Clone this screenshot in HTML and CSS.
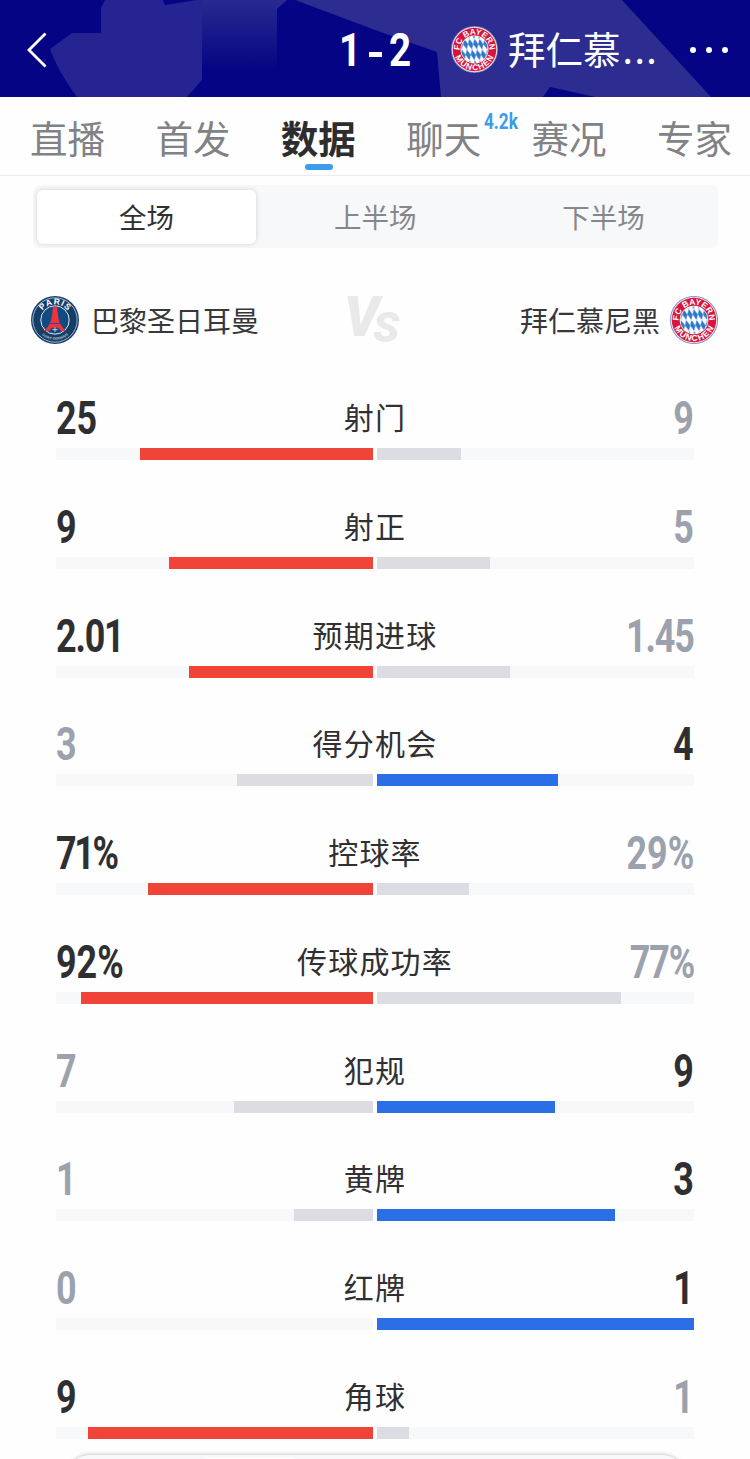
FILE: index.html
```html
<!DOCTYPE html>
<html lang="zh">
<head>
    <meta charset="UTF-8">
    <title>比赛数据</title>
    <link rel="stylesheet" href="styles.css">
</head>
<body>
<svg class="defs" width="0" height="0">
    <defs>
        <path id="arcTop" d="M8.8 24a15.2 15.2 0 0 1 30.4 0"/>
        <path id="arcBottom" d="M3 24a21 21 0 0 0 42 0"/>
        <path id="psgTop" d="M8.4 24a15.6 15.6 0 0 1 31.2 0"/>
        <path id="psgBottom" d="M4 24a20 20 0 0 0 40 0"/>
        <pattern id="lozenge" width="5.2" height="11" patternUnits="userSpaceOnUse" patternTransform="translate(24 24) skewX(14)">
            <path d="M2.600 0 5.200 5.500 2.600 11 0 5.500z" fill="#2f78c8"/>
        </pattern>
        <symbol id="bayern" viewBox="0 0 48 48">
            <circle cx="24" cy="24" r="24" fill="#6f7fc0"/>
            <circle cx="24" cy="24" r="23.2" fill="#f4dfe8"/>
            <circle cx="24" cy="24" r="22.2" fill="#d9143b"/>
            <circle cx="24" cy="24" r="14.3" fill="#fff"/>
            <circle cx="24" cy="24" r="13.6" fill="url(#lozenge)"/>
            <text class="crest-text"><textPath href="#arcTop" startOffset="50%">FC BAYERN</textPath></text>
            <text class="crest-text"><textPath href="#arcBottom" startOffset="50%" textLength="50">MÜNCHEN</textPath></text>
        </symbol>
        <symbol id="psg" viewBox="0 0 48 48">
            <circle cx="24" cy="24" r="24" fill="#173e68"/>
            <circle cx="24" cy="24" r="22.2" fill="none" stroke="#c5d3df" stroke-width=".8"/>
            <circle cx="24" cy="24" r="14.2" fill="#124b80" stroke="#dce6ee" stroke-width="1"/>
            <path d="M22 10.500h4l1 9c1 7 3.500 12 8.500 15.500h-6c-1-5-10-5-11 0h-6c5-3.500 7.500-8.500 8.500-15.500z" fill="#ee3340"/>
            <path d="M18.500 27.500h11" stroke="#124b80" stroke-width=".8"/>
            <path d="M24 31v5M21.500 33.500h5" stroke="#b9c6cf" stroke-width="1"/>
            <text class="crest-text psg-name"><textPath href="#psgTop" startOffset="50%" textLength="29">PARIS</textPath></text>
            <text class="crest-text psg-sub"><textPath href="#psgBottom" startOffset="50%">SAINT-GERMAIN</textPath></text>
        </symbol>
    </defs>
</svg>
<div class="page">
    <div class="header">
        <svg class="header-bg" viewBox="0 0 750 97" preserveAspectRatio="none">
            <defs>
                <linearGradient id="patch" x1="0" y1="0" x2="0" y2="1">
                    <stop offset="0" stop-color="#292990"/>
                    <stop offset=".35" stop-color="#1b1b8b"/>
                    <stop offset=".9" stop-color="#040484"/>
                </linearGradient>
            </defs>
            <rect width="750" height="97" fill="#040484"/>
            <path d="M201 0h86l-10 9v71h-76z" fill="url(#patch)"/>
            <path d="M50 49l22-16h29V8l4-8h97v80l-15 17H77C64 79 56 65 50 49z" fill="#252492"/>
            <path d="M163 0l2 5 32-5z" fill="#040484"/>
            <path d="M295 0h327l89 97H595l-45-10-7 10H441l-4-45-62-22z" fill="#2d2c91"/>
        </svg>
        <svg class="back" viewBox="0 0 20 36"><path d="M18.500 1.500 2 18l16.500 16.500" fill="none" stroke="#fff" stroke-width="2.800"/></svg>
        <div class="score"><span>1</span><i></i><span>2</span></div>
        <svg class="header-logo"><use href="#bayern"/></svg>
        <div class="header-name">拜仁慕<em>...</em></div>
        <div class="more"><i></i><i></i><i></i></div>
    </div>
    <ul class="tabs">
        <li>直播</li>
        <li>首发</li>
        <li class="on">数据</li>
        <li>聊天<em>4.2k</em></li>
        <li>赛况</li>
        <li>专家</li>
    </ul>
    <ul class="period">
        <li class="on">全场</li>
        <li>上半场</li>
        <li>下半场</li>
    </ul>
    <div class="teams">
        <div class="team"><svg><use href="#psg"/></svg><span>巴黎圣日耳曼</span></div>
        <svg class="vs" viewBox="0 0 56 48">
            <text x="-3" y="40" font-size="55">V</text>
            <text class="vs-s" x="26" y="46" font-size="43">S</text>
        </svg>
        <div class="team"><span>拜仁慕尼黑</span><svg><use href="#bayern"/></svg></div>
    </div>
    <ul class="stats">
        <li>
            <div class="info"><b class="win">25</b><span>射门</span><b>9</b></div>
            <div class="bars"><p><i class="red" style="width:73.6%"></i></p><p><i style="width:26.4%"></i></p></div>
        </li>
        <li>
            <div class="info"><b class="win">9</b><span>射正</span><b>5</b></div>
            <div class="bars"><p><i class="red" style="width:64.3%"></i></p><p><i style="width:35.7%"></i></p></div>
        </li>
        <li>
            <div class="info"><b class="win tight">2.01</b><span>预期进球</span><b class="tight">1.45</b></div>
            <div class="bars"><p><i class="red" style="width:58.1%"></i></p><p><i style="width:41.9%"></i></p></div>
        </li>
        <li>
            <div class="info"><b>3</b><span>得分机会</span><b class="win">4</b></div>
            <div class="bars"><p><i style="width:42.9%"></i></p><p><i class="blue" style="width:57.1%"></i></p></div>
        </li>
        <li>
            <div class="info"><b class="win tighter">71%</b><span>控球率</span><b>29%</b></div>
            <div class="bars"><p><i class="red" style="width:71%"></i></p><p><i style="width:29%"></i></p></div>
        </li>
        <li>
            <div class="info"><b class="win">92%</b><span>传球成功率</span><b class="tight">77%</b></div>
            <div class="bars"><p><i class="red" style="width:92%"></i></p><p><i style="width:77%"></i></p></div>
        </li>
        <li>
            <div class="info"><b>7</b><span>犯规</span><b class="win">9</b></div>
            <div class="bars"><p><i style="width:43.8%"></i></p><p><i class="blue" style="width:56.2%"></i></p></div>
        </li>
        <li>
            <div class="info"><b>1</b><span>黄牌</span><b class="win">3</b></div>
            <div class="bars"><p><i style="width:25%"></i></p><p><i class="blue" style="width:75%"></i></p></div>
        </li>
        <li>
            <div class="info"><b>0</b><span>红牌</span><b class="win">1</b></div>
            <div class="bars"><p><i style="width:0"></i></p><p><i class="blue" style="width:100%"></i></p></div>
        </li>
        <li>
            <div class="info"><b class="win">9</b><span>角球</span><b>1</b></div>
            <div class="bars"><p><i class="red" style="width:90%"></i></p><p><i style="width:10%"></i></p></div>
        </li>
    </ul>
    <div class="sheet"><i></i></div>
</div>
</body>
</html>
```
FILE: styles.css
```css
body, div, ul, li, p, span, em, i, b {
    margin: 0;
    padding: 0;
    font-style: normal;
}

body {
    font-family: "Noto Sans CJK SC", sans-serif;
    background: #fefefe;
}

ul, li {
    list-style: none;
}

svg {
    display: block;
    flex: none;
}

.defs {
    position: absolute;
}

.page {
    position: relative;
    width: 750px;
    height: 1459px;
    overflow: hidden;
}

/* 顶部 */
.header {
    position: relative;
    display: flex;
    align-items: center;
    box-sizing: border-box;
    height: 97px;
    padding-left: 27px;
    color: #fff;
}

.header-bg {
    position: absolute;
    left: 0;
    top: 0;
    width: 750px;
    height: 97px;
}

.back, .score, .header-logo, .header-name, .more {
    position: relative;
}

.back {
    width: 20px;
    height: 36px;
    margin-top: 3px;
}

.score {
    display: flex;
    align-items: center;
    justify-content: space-between;
    width: 72px;
    margin: 3px 0 0 292px;
    font: bold 46px/50px Roboto, sans-serif;
}

.score span {
    width: 22px;
    transform: scaleX(.84);
    transform-origin: 0 50%;
}

.score i {
    width: 13px;
    height: 5px;
    margin-top: 8px;
    background: #fff;
}

.header-logo {
    width: 47px;
    height: 47px;
    margin: 2px 0 0 40px;
}

.header-name {
    flex: none;
    width: 150px;
    margin: -2px 0 0 10px;
    font-size: 37.5px;
    line-height: 50px;
    white-space: nowrap;
}

.header-name em {
    margin-left: 2px;
    letter-spacing: 1.5px;
}

.more {
    display: flex;
    gap: 10px;
    margin: 2px 0 0 32px;
}

.more i {
    width: 6px;
    height: 6px;
    border-radius: 50%;
    background: #fff;
}

/* 导航 */
.tabs {
    display: flex;
    gap: 50.4px;
    height: 78px;
    padding-left: 30px;
    border-bottom: 1px solid #ebecee;
    color: #808285;
}

.tabs li {
    position: relative;
    flex: none;
    font-size: 37.5px;
    line-height: 80px;
    height: 78px;
}

.tabs .on {
    color: #2d2d2f;
    font-weight: bold;
}

.tabs .on:after {
    content: "";
    position: absolute;
    left: 24px;
    bottom: 5px;
    width: 28px;
    height: 6px;
    border-radius: 3px;
    background: #3c9bea;
}

.tabs em {
    position: absolute;
    left: 78px;
    top: 12px;
    font: bold 22px/26px Roboto, sans-serif;
    color: #3c9bea;
    transform: scaleX(.78);
    transform-origin: 0 0;
}

.period {
    display: flex;
    box-sizing: border-box;
    width: 685px;
    height: 63px;
    margin: 9px 0 0 33px;
    border-radius: 6px;
    background: #f7f8fa;
    color: #85878b;
}

.period li {
    flex: none;
    width: 228.3px;
    font-size: 27.5px;
    line-height: 63px;
    text-align: center;
}

.period .on {
    width: 219px;
    margin: 5px 5px 4px 4px;
    line-height: 53px;
    border-radius: 6px;
    background: #fff;
    box-shadow: 0 0 5px rgba(0, 0, 0, .16);
    color: #303032;
}

/* 球队 */
.teams {
    display: flex;
    align-items: center;
    justify-content: space-between;
    height: 48px;
    margin: 48px 32px 0 31px;
}

.team {
    display: flex;
    align-items: center;
    gap: 12px;
    width: 240px;
    font-size: 28px;
    line-height: 48px;
    color: #38383a;
}

.team:last-child {
    gap: 10px;
    justify-content: flex-end;
}

.team svg {
    width: 48px;
    height: 48px;
}

.crest-text {
    font: bold 8.500px "Liberation Sans", sans-serif;
    fill: #fff;
    text-anchor: middle;
}

.psg-name {
    font-size: 8.500px;
}

.psg-sub {
    font-size: 3.600px;
    fill: #a8bccc;
}

.vs {
    width: 56px;
    height: 48px;
    overflow: visible;
    font-family: Roboto, sans-serif;
    font-weight: 900;
    font-style: italic;
    fill: #e9e9e9;
}

.vs-s {
    stroke: #fefefe;
    stroke-width: 4px;
    paint-order: stroke;
}

/* 数据对比 */
.stats {
    margin: 44px 56px 0;
}

.stats li {
    height: 108.75px;
}

.info {
    display: grid;
    grid-template-columns: 1fr auto 1fr;
    align-items: center;
    height: 60px;
}

.info b {
    font: bold 46px/60px Roboto, sans-serif;
    color: #9ba2ae;
    transform: scaleX(.78);
    transform-origin: 0 50%;
}

.info b:last-child {
    text-align: right;
    transform-origin: 100% 50%;
}

.info .win {
    color: #2f2f31;
}

.info .tight {
    letter-spacing: -1.5px;
}

.info .tighter {
    letter-spacing: -3px;
}

.info span {
    margin-bottom: 4px;
    font-size: 30px;
    letter-spacing: 1.200px;
    line-height: 56px;
    color: #303032;
}

.bars {
    display: flex;
    gap: 4px;
}

.bars p {
    display: flex;
    flex: 1;
    height: 12px;
    background: #f7f8fa;
}

.bars p:first-child {
    justify-content: flex-end;
}

.bars i {
    background: #dcdde2;
}

.bars .red {
    background: #f04438;
}

.bars .blue {
    background: #2a6fe6;
}

/* 底部浮层 */
.sheet {
    position: absolute;
    left: 69px;
    top: 1455px;
    width: 614px;
    height: 40px;
    border-radius: 20px;
    background: #f8f9fa;
    box-shadow: 0 0 4px rgba(0, 0, 0, .3);
}

.sheet i {
    display: block;
    width: 106px;
    height: 30px;
    margin: 3px 0 0 128px;
    border-radius: 10px;
    background: #fff;
}
```
